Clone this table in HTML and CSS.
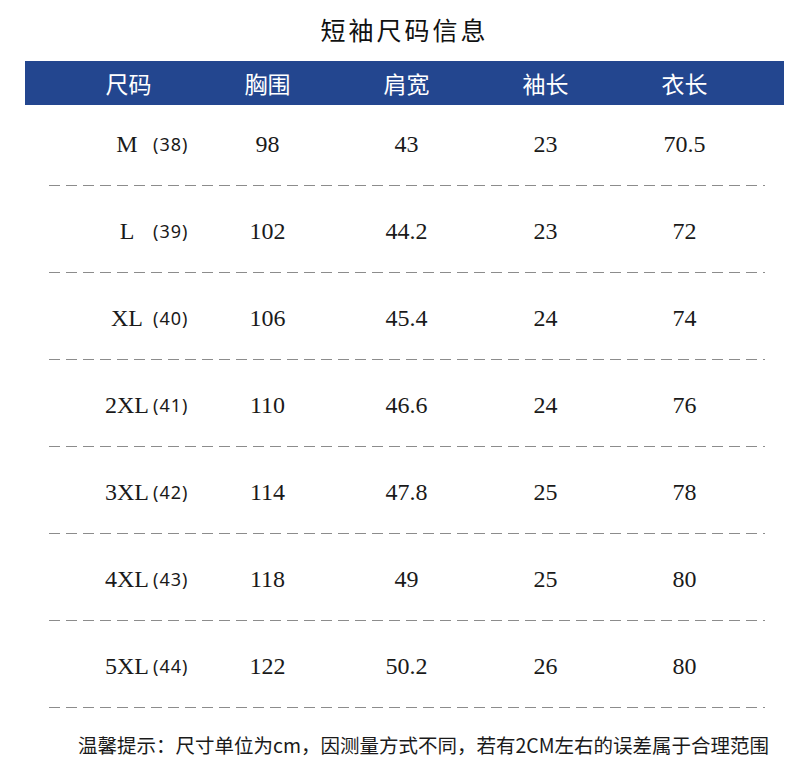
FILE: index.html
```html
<!DOCTYPE html>
<html lang="zh-CN">
<head>
<meta charset="utf-8">
<title>短袖尺码信息</title>
<link rel="stylesheet" href="styles.css">
</head>
<body>
<div class="page">
  <h1 class="title">短袖尺码信息</h1>
  <div class="thead">
    <div class="th">尺码</div>
    <div class="th">胸围</div>
    <div class="th">肩宽</div>
    <div class="th">袖长</div>
    <div class="th">衣长</div>
  </div>
  <div class="tbody">
    <div class="row first">
      <div class="cells">
        <div class="size"><span class="sz">M</span><span class="num">(38)</span></div>
        <div class="td">98</div><div class="td">43</div><div class="td">23</div><div class="td">70.5</div>
      </div>
      <div class="rule"></div>
    </div>
    <div class="row">
      <div class="cells">
        <div class="size"><span class="sz">L</span><span class="num">(39)</span></div>
        <div class="td">102</div><div class="td">44.2</div><div class="td">23</div><div class="td">72</div>
      </div>
      <div class="rule"></div>
    </div>
    <div class="row">
      <div class="cells">
        <div class="size"><span class="sz">XL</span><span class="num">(40)</span></div>
        <div class="td">106</div><div class="td">45.4</div><div class="td">24</div><div class="td">74</div>
      </div>
      <div class="rule"></div>
    </div>
    <div class="row">
      <div class="cells">
        <div class="size"><span class="sz">2XL</span><span class="num">(41)</span></div>
        <div class="td">110</div><div class="td">46.6</div><div class="td">24</div><div class="td">76</div>
      </div>
      <div class="rule"></div>
    </div>
    <div class="row">
      <div class="cells">
        <div class="size"><span class="sz">3XL</span><span class="num">(42)</span></div>
        <div class="td">114</div><div class="td">47.8</div><div class="td">25</div><div class="td">78</div>
      </div>
      <div class="rule"></div>
    </div>
    <div class="row">
      <div class="cells">
        <div class="size"><span class="sz">4XL</span><span class="num">(43)</span></div>
        <div class="td">118</div><div class="td">49</div><div class="td">25</div><div class="td">80</div>
      </div>
      <div class="rule"></div>
    </div>
    <div class="row">
      <div class="cells">
        <div class="size"><span class="sz">5XL</span><span class="num">(44)</span></div>
        <div class="td">122</div><div class="td">50.2</div><div class="td">26</div><div class="td">80</div>
      </div>
      <div class="rule"></div>
    </div>
  </div>
  <p class="note">温馨提示：尺寸单位为cm，因测量方式不同，若有2CM左右的误差属于合理范围</p>
</div>
</body>
</html>
```

FILE: styles.css
```css
html, body {
  margin: 0;
  padding: 0;
  background: #ffffff;
}

body {
  font-family: "Noto Sans CJK SC", "Noto Sans", sans-serif;
  color: #1e1e1e;
}

.page {
  width: 759px;
  margin-left: 25px;
}

.title {
  margin: 0;
  height: 61px;
  box-sizing: border-box;
  padding-bottom: 4px;
  display: flex;
  align-items: center;
  justify-content: center;
  font-size: 25px;
  font-weight: 400;
  letter-spacing: 3px;
  color: #111;
}

.thead {
  height: 44px;
  background: #23468f;
  display: grid;
  grid-template-columns: repeat(5, 139px);
  padding-left: 34px;
  align-items: center;
}

.th {
  text-align: center;
  color: #ffffff;
  font-size: 23px;
  line-height: 1;
}

.cells {
  display: grid;
  grid-template-columns: repeat(5, 139px);
  margin-left: 34px;
  height: 86px;
  box-sizing: border-box;
  padding-top: 4px;
  align-items: center;
}

.row.first .cells {
  height: 80px;
  padding-top: 0;
  padding-bottom: 2px;
}

.td {
  text-align: center;
  font-family: "Liberation Serif", serif;
  font-size: 24px;
  line-height: 1;
  color: #1a1a1a;
}

.size {
  display: flex;
  align-items: center;
  padding-left: 43px;
  line-height: 1;
}

.sz {
  width: 50px;
  text-align: center;
  font-family: "Liberation Serif", serif;
  font-size: 24px;
  color: #1a1a1a;
}

.num {
  margin-left: 1px;
  font-family: "Noto Sans", sans-serif;
  font-size: 18px;
  letter-spacing: 1px;
  color: #1a1a1a;
}

.rule {
  margin-left: 24px;
  width: 716px;
  height: 1px;
  background: repeating-linear-gradient(to right, #8c8c8c 0 11px, transparent 11px 17px);
}

.note {
  margin: 0 0 0 53px;
  padding-top: 24px;
  font-size: 19.5px;
  line-height: 26px;
  color: #1a1a1a;
  white-space: nowrap;
}
```
